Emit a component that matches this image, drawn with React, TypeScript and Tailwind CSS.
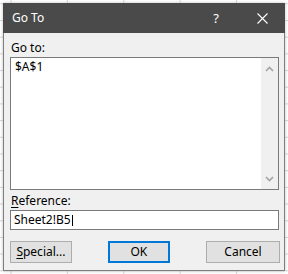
import React from 'react'

const font = { fontFamily: '"Noto Sans", "Open Sans", Arial, sans-serif' }

function Chevron({ up }: { up?: boolean }) {
  return (
    <svg width="9" height="6" viewBox="0 0 9 6" className="block">
      <path
        d={up ? 'M1 5 L4.5 1.5 L8 5' : 'M1 1 L4.5 4.5 L8 1'}
        fill="none"
        stroke="#a3a3a3"
        strokeWidth={1.6}
      />
    </svg>
  )
}

function Button({ label, accel, primary }: { label: string; accel?: string; primary?: boolean }) {
  return (
    <button
      className={
        primary
          ? 'w-[74px] h-[22px] bg-[#e1e1e1] border-2 border-[#0078d7] text-[12px] text-black flex items-center justify-center'
          : 'w-[74px] h-[22px] bg-[#e1e1e1] border border-[#adadad] text-[12px] text-black flex items-center justify-center'
      }
    >
      {accel ? (
        <span>
          <span className="underline underline-offset-2">{accel}</span>
          {label}
        </span>
      ) : (
        <span>{label}</span>
      )}
    </button>
  )
}

export default function App() {
  return (
    <div
      className="w-[288px] h-[274px] p-[3px] bg-white bg-[linear-gradient(to_right,#d6d6d6_1px,transparent_1px),linear-gradient(to_bottom,#d6d6d6_1px,transparent_1px)] bg-[size:56.4px_16.7px] bg-[position:10.5px_3.3px]"
      style={font}
    >
      <div className="w-[282px] h-[268px] flex flex-col bg-[#f0f0f0] shadow-[0_0_3px_rgba(0,0,0,0.25)]">
        {/* title bar */}
        <div className="h-[30px] bg-[#4a4a4a] flex items-center pl-[9px] pr-[17px] text-white">
          <span className="text-[12px] leading-none">Go To</span>
          <span className="ml-auto text-[13px] leading-none mr-[38px]">?</span>
          <svg width="11" height="11" viewBox="0 0 11 11">
            <path d="M0.5 0.5 L10.5 10.5 M10.5 0.5 L0.5 10.5" stroke="white" strokeWidth={1.1} />
          </svg>
        </div>

        {/* body */}
        <div className="flex-1 flex flex-col border-x border-b border-[#7e7e7e] pl-[6px]">
          <div className="mt-[6px] h-[18px] text-[12px] leading-[18px] text-black pl-px">Go to:</div>
          <div className="w-[269px] h-[133px] border border-[#7a7a7a] bg-white flex">
            <div className="flex-1 pl-[4px] pt-[1px] text-[12px] leading-[16px] text-black">$A$1</div>
            <div className="w-[17px] bg-[#f0f0f0] flex flex-col items-center justify-between pt-[8px] pb-[7px]">
              <Chevron up />
              <Chevron />
            </div>
          </div>

          <div className="mt-[2px] h-[18px] text-[12px] leading-[18px] text-black pl-px">
            <span className="underline underline-offset-2">R</span>eference:
          </div>
          <div className="w-[269px] h-[20px] border border-[#7a7a7a] bg-white flex items-center pl-[3px] text-[12px] text-black">
            <span>Sheet2!B5</span>
            <span className="inline-block w-px h-[11px] bg-black ml-px" />
          </div>

          <div className="mt-[11px] flex gap-[36px] w-[269px]">
            <Button label="pecial..." accel="S" />
            <Button label="OK" primary />
            <div className="ml-auto -mr-px">
              <Button label="Cancel" />
            </div>
          </div>
        </div>
      </div>
    </div>
  )
}
